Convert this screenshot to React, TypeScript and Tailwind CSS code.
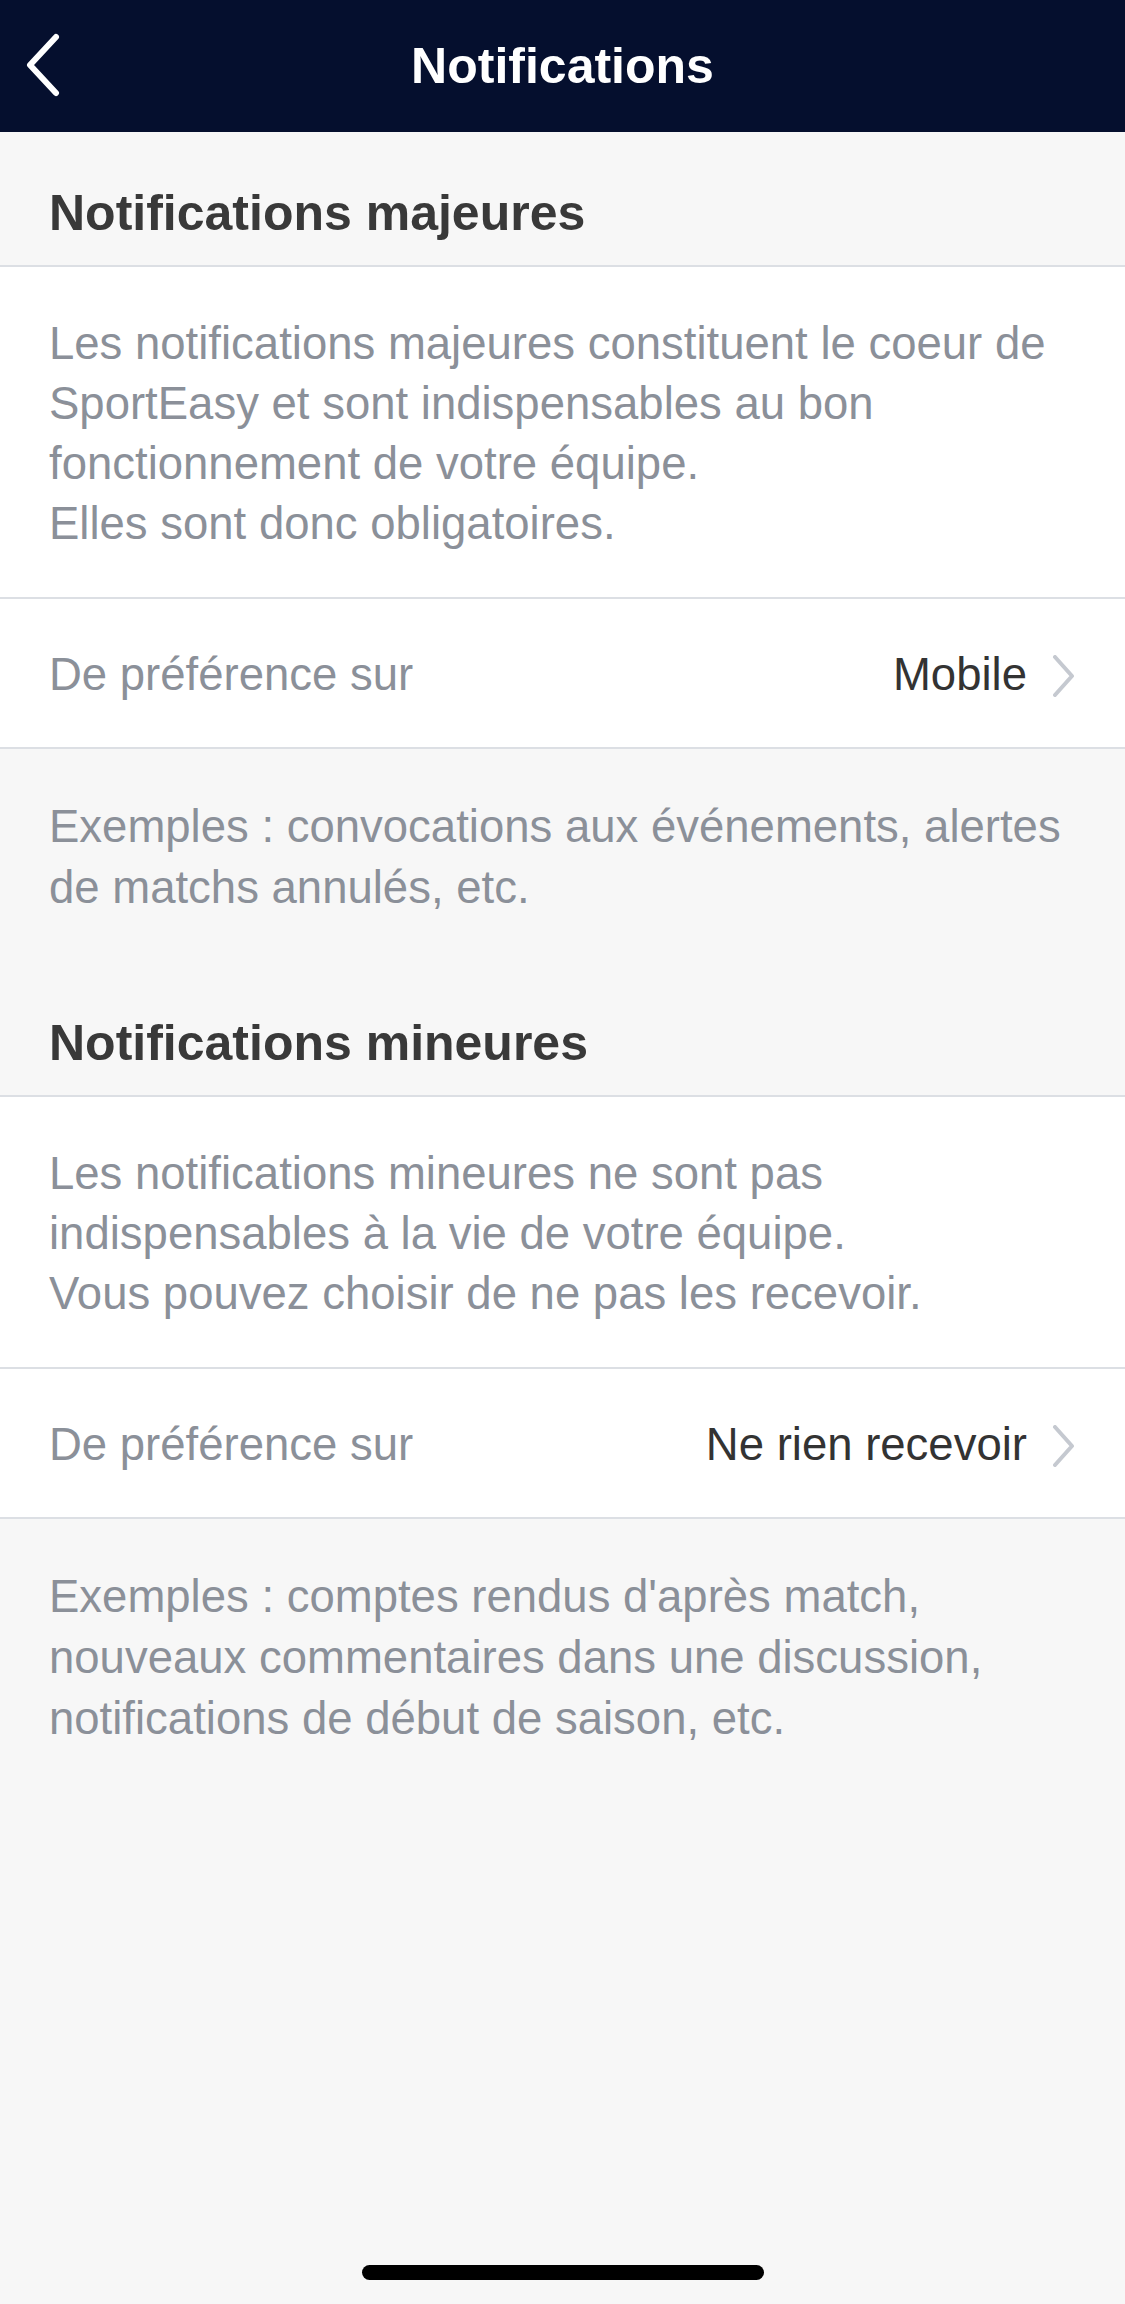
import React from 'react';

const FONT = { fontFamily: '"Liberation Sans", Arial, Helvetica, sans-serif' };

const BackChevron: React.FC = () => (
  <svg width="40" height="64" viewBox="0 0 40 64" fill="none">
    <path d="M32 4 L6 32 L32 60" stroke="#ffffff" strokeWidth="6" strokeLinecap="round" strokeLinejoin="round" />
  </svg>
);

const RowChevron: React.FC = () => (
  <svg width="26" height="42" viewBox="0 0 26 42" fill="none">
    <path d="M4 2 L21 21 L4 40" stroke="#c5c9d0" strokeWidth="4" strokeLinecap="round" strokeLinejoin="round" />
  </svg>
);

const SectionHeading: React.FC<{ title: string; top: string }> = ({ title, top }) => (
  <div className={`px-[49px] ${top} pb-[22px] border-b-2 border-[#dcdfe4]`}>
    <h2 className="text-[50px] leading-[60px] font-bold text-[#393939]">{title}</h2>
  </div>
);

const PrefRow: React.FC<{ value: string }> = ({ value }) => (
  <div className="h-[150px] bg-white flex items-center justify-between pl-[49px] pr-[48px] pt-[5px] border-b-2 border-[#dcdfe4]">
    <span className="text-[45.5px] text-[#8b9099]">De préférence sur</span>
    <div className="flex items-center gap-[24px]">
      <span className="text-[45.5px] text-[#333333]">{value}</span>
      <RowChevron />
    </div>
  </div>
);

// one block of a settings group: heading, description, chosen channel, examples
const Group: React.FC<{ title: string; top: string; lines: string[]; value: string; examples: string }> = ({
  title,
  top,
  lines,
  value,
  examples,
}) => (
  <section>
    <SectionHeading title={title} top={top} />
    <div className="bg-white px-[49px] pt-[47px] pb-[43px] border-b-2 border-[#dcdfe4]">
      {lines.map((l, i) => (
        <p key={i} className="text-[45.5px] leading-[60px] text-[#8b9099]">
          {l}
        </p>
      ))}
    </div>
    <PrefRow value={value} />
    <p className="px-[49px] pt-[47px] pr-[60px] text-[45.5px] leading-[61px] text-[#8b9099]">{examples}</p>
  </section>
);

const App: React.FC = () => {
  return (
    <div className="w-[1125px] h-[2304px] bg-[#f7f7f7] flex flex-col" style={FONT}>
      <header className="h-[132px] bg-[#050f2e] relative flex items-center justify-center shrink-0">
        <div className="absolute left-[24px] top-[33px]">
          <BackChevron />
        </div>
        <h1 className="text-[50px] font-bold text-white">Notifications</h1>
      </header>

      <Group
        title="Notifications majeures"
        top="pt-[51px]"
        lines={[
          'Les notifications majeures constituent le coeur de',
          'SportEasy et sont indispensables au bon',
          'fonctionnement de votre équipe.',
          'Elles sont donc obligatoires.',
        ]}
        value="Mobile"
        examples="Exemples : convocations aux événements, alertes de matchs annulés, etc."
      />

      <Group
        title="Notifications mineures"
        top="pt-[95px]"
        lines={[
          'Les notifications mineures ne sont pas',
          'indispensables à la vie de votre équipe.',
          'Vous pouvez choisir de ne pas les recevoir.',
        ]}
        value="Ne rien recevoir"
        examples="Exemples : comptes rendus d'après match, nouveaux commentaires dans une discussion, notifications de début de saison, etc."
      />

      <div className="mt-auto mb-[24px] mx-auto w-[402px] h-[15px] rounded-full bg-black" />
    </div>
  );
};

export default App;
